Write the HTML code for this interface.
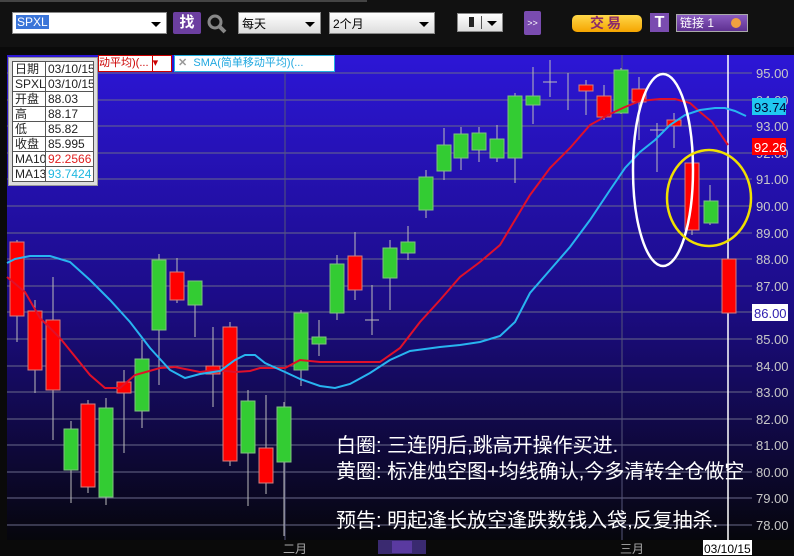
<!DOCTYPE html>
<html><head><meta charset="utf-8"><style>
body{margin:0;width:794px;height:556px;overflow:hidden;background:#0a0a0a;font-family:"Liberation Sans","Noto Sans CJK SC",sans-serif;position:relative}
.a{position:absolute}
.sel{background:linear-gradient(#fff,#ddd);border:1px solid #888;font-size:12px;color:#000;box-sizing:border-box;padding:2px 3px}
.arr{position:absolute;right:5px;top:9px;border-left:5px solid transparent;border-right:5px solid transparent;border-top:5px solid #000}
table{border-collapse:collapse;font-size:12px;color:#222;background:#fff;table-layout:fixed;width:82px}
td{border:1px solid #555;padding:0 2px;height:14px;line-height:14px;white-space:nowrap;overflow:hidden}
</style></head><body>
<div class="a" style="left:0;top:0;width:794px;height:47px;background:#111"></div>
<div class="a" style="left:0;top:0;width:367px;height:2px;background:#444"></div>
<div class="a sel" style="left:12px;top:12px;width:155px;height:22px;background:#fff"><span style="background:#3a74d8;color:#fff;padding:0 1px">SPXL</span><div class="arr"></div></div>
<div class="a" style="left:173px;top:12px;width:28px;height:22px;background:#6c3fa0;color:#fff;font-weight:bold;font-size:15px;text-align:center;line-height:22px;border-radius:2px">找</div>
<svg class="a" style="left:205px;top:12px" width="24" height="22"><circle cx="10" cy="10" r="6" stroke="#888" stroke-width="3" fill="none"/><line x1="14" y1="14" x2="20" y2="20" stroke="#888" stroke-width="4"/></svg>
<div class="a sel" style="left:238px;top:12px;width:83px;height:22px">每天<div class="arr"></div></div>
<div class="a sel" style="left:329px;top:12px;width:106px;height:22px">2个月<div class="arr"></div></div>
<div class="a sel" style="left:457px;top:13px;width:46px;height:19px"><div class="a" style="left:11px;top:3px;width:5px;height:10px;background:#222"></div><div class="a" style="left:23px;top:2px;width:1px;height:13px;background:#555"></div><div class="arr" style="top:7px"></div></div>
<div class="a" style="left:524px;top:11px;width:17px;height:24px;background:#7a4cb0;color:#fff;font-size:9px;text-align:center;line-height:24px;border-radius:2px">&gt;&gt;</div>
<div class="a" style="left:572px;top:15px;width:70px;height:17px;background:linear-gradient(#ffd84a,#f5a400);border-radius:5px;color:#8a2a6a;font-weight:bold;font-size:14px;text-align:center;line-height:17px;letter-spacing:3px">交易</div>
<div class="a" style="left:650px;top:13px;width:19px;height:19px;background:#7a4cb0;color:#fff;font-weight:bold;font-size:16px;text-align:center;line-height:19px">T</div>
<div class="a" style="left:676px;top:14px;width:72px;height:18px;background:linear-gradient(#8a5cc0,#5e3090);border:1px solid #aaa;box-sizing:border-box;color:#fff;font-size:12px;line-height:16px;padding-left:3px">链接 1<div class="a" style="left:54px;top:3px;width:10px;height:10px;border-radius:50%;background:#f0a040"></div></div>

<svg class="a" style="left:0;top:47px" width="794" height="509">
<defs><linearGradient id="g" x1="0" y1="0" x2="0" y2="1"><stop offset="0" stop-color="#2c16d6"/><stop offset="0.5" stop-color="#1c0c88"/><stop offset="1" stop-color="#06060c"/></linearGradient></defs>
<rect x="0" y="0" width="794" height="509" fill="#0a0a0a"/>
<rect x="7" y="8" width="787" height="485" fill="url(#g)"/>
<g transform="translate(0,-47)">
<g stroke="#6a6a8a" stroke-width="1">
<line x1="7" y1="73" x2="752" y2="73"/><line x1="7" y1="100" x2="752" y2="100"/><line x1="7" y1="126" x2="752" y2="126"/><line x1="7" y1="153" x2="752" y2="153"/><line x1="7" y1="179" x2="752" y2="179"/><line x1="7" y1="206" x2="752" y2="206"/><line x1="7" y1="233" x2="752" y2="233"/><line x1="7" y1="259" x2="752" y2="259"/><line x1="7" y1="286" x2="752" y2="286"/><line x1="7" y1="312" x2="752" y2="312"/><line x1="7" y1="339" x2="752" y2="339"/><line x1="7" y1="366" x2="752" y2="366"/><line x1="7" y1="392" x2="752" y2="392"/><line x1="7" y1="419" x2="752" y2="419"/><line x1="7" y1="445" x2="752" y2="445"/><line x1="7" y1="472" x2="752" y2="472"/><line x1="7" y1="498" x2="752" y2="498"/><line x1="7" y1="525" x2="752" y2="525"/>
<line x1="285" y1="55" x2="285" y2="540" stroke="#55557a"/><line x1="622" y1="55" x2="622" y2="540" stroke="#55557a"/>
</g>
<line x1="728" y1="55" x2="728" y2="540" stroke="#fff" stroke-width="1.5"/>
<g stroke="#bbb" stroke-width="1">
<line x1="17" y1="240" x2="17" y2="342"/><line x1="35" y1="300" x2="35" y2="393"/><line x1="53" y1="277" x2="53" y2="440"/><line x1="71" y1="421" x2="71" y2="503"/><line x1="88" y1="400" x2="88" y2="493"/><line x1="106" y1="398" x2="106" y2="505"/><line x1="124" y1="370" x2="124" y2="453"/><line x1="142" y1="340" x2="142" y2="428"/><line x1="159" y1="254" x2="159" y2="385"/><line x1="177" y1="258" x2="177" y2="303"/><line x1="195" y1="281" x2="195" y2="337"/><line x1="213" y1="327" x2="213" y2="407"/><line x1="230" y1="322" x2="230" y2="466"/><line x1="248" y1="390" x2="248" y2="506"/><line x1="266" y1="395" x2="266" y2="494"/><line x1="284" y1="402" x2="284" y2="536"/><line x1="301" y1="310" x2="301" y2="386"/><line x1="319" y1="320" x2="319" y2="356"/><line x1="337" y1="255" x2="337" y2="320"/><line x1="355" y1="232" x2="355" y2="300"/><line x1="372" y1="285" x2="372" y2="335"/><line x1="390" y1="240" x2="390" y2="310"/><line x1="408" y1="226" x2="408" y2="260"/><line x1="426" y1="170" x2="426" y2="218"/><line x1="444" y1="128" x2="444" y2="180"/><line x1="461" y1="127" x2="461" y2="170"/><line x1="479" y1="127" x2="479" y2="162"/><line x1="497" y1="125" x2="497" y2="162"/><line x1="515" y1="93" x2="515" y2="183"/><line x1="533" y1="67" x2="533" y2="124"/><line x1="550" y1="60" x2="550" y2="97"/><line x1="568" y1="73" x2="568" y2="110"/><line x1="586" y1="80" x2="586" y2="115"/><line x1="604" y1="85" x2="604" y2="120"/><line x1="621" y1="68" x2="621" y2="114"/><line x1="639" y1="77" x2="639" y2="140"/><line x1="657" y1="123" x2="657" y2="172"/><line x1="674" y1="113" x2="674" y2="148"/><line x1="692" y1="144" x2="692" y2="235"/><line x1="710" y1="185" x2="710" y2="225"/>
<line x1="365" y1="320" x2="379" y2="320"/><line x1="543" y1="82" x2="557" y2="82"/><line x1="650" y1="130" x2="664" y2="130"/>
</g>
<g stroke="#d08080" stroke-width="1" fill="#f00">
<rect x="10" y="242" width="14" height="74"/><rect x="28" y="311" width="14" height="59"/><rect x="46" y="320" width="14" height="70"/><rect x="81" y="404" width="14" height="83"/><rect x="117" y="382" width="14" height="11"/><rect x="170" y="272" width="14" height="28"/><rect x="206" y="366" width="14" height="8"/><rect x="223" y="327" width="14" height="134"/><rect x="259" y="448" width="14" height="35"/><rect x="348" y="256" width="14" height="34"/><rect x="579" y="85" width="14" height="6"/><rect x="597" y="96" width="14" height="21"/><rect x="632" y="89" width="14" height="13"/><rect x="667" y="120" width="14" height="6"/><rect x="685" y="163" width="14" height="67"/><rect x="722" y="259" width="14" height="54"/>
</g>
<g stroke="#80c080" stroke-width="1" fill="#33cc33">
<rect x="64" y="429" width="14" height="41"/><rect x="99" y="408" width="14" height="89"/><rect x="135" y="359" width="14" height="52"/><rect x="152" y="260" width="14" height="70"/><rect x="188" y="281" width="14" height="24"/><rect x="241" y="401" width="14" height="52"/><rect x="277" y="407" width="14" height="55"/><rect x="294" y="313" width="14" height="57"/><rect x="312" y="337" width="14" height="7"/><rect x="330" y="264" width="14" height="49"/><rect x="383" y="248" width="14" height="30"/><rect x="401" y="242" width="14" height="11"/><rect x="419" y="177" width="14" height="33"/><rect x="437" y="145" width="14" height="26"/><rect x="454" y="134" width="14" height="24"/><rect x="472" y="133" width="14" height="17"/><rect x="490" y="139" width="14" height="19"/><rect x="508" y="96" width="14" height="62"/><rect x="526" y="96" width="14" height="9"/><rect x="614" y="70" width="14" height="43"/><rect x="704" y="201" width="14" height="22"/>
</g>
<polyline fill="none" stroke="#e0102a" stroke-width="2" points="7,277 25,292 40,318 60,338 90,375 105,388 120,388 135,375 160,368 175,367 200,372 215,370 235,372 250,371 260,368 285,368 300,360 320,362 340,362 360,362 380,362 400,348 420,322 440,300 460,277 480,262 500,245 515,220 530,195 550,168 570,148 590,125 610,114 625,107 640,101 660,99 675,99 690,103 700,112 712,122 728,145"/>
<polyline fill="none" stroke="#28b4f0" stroke-width="2" points="7,263 15,259 30,256 50,256 70,262 90,280 110,300 130,322 150,348 170,370 185,378 200,374 220,371 235,360 245,355 255,355 265,363 285,372 300,379 320,386 335,388 350,384 370,373 390,360 410,351 440,347 460,345 480,342 500,336 515,322 530,293 550,270 570,247 590,220 610,190 625,168 640,152 655,140 670,125 685,115 700,110 715,108 725,108 735,111 746,116"/>
<ellipse cx="663" cy="170" rx="30" ry="96" fill="none" stroke="#fff" stroke-width="2.5"/>
<ellipse cx="709" cy="198" rx="42" ry="48" fill="none" stroke="#f0e000" stroke-width="2.5"/>
<g fill="#c8c8c8" font-size="13" font-family="Liberation Sans,sans-serif">
<text x="756" y="78">95.00</text><text x="756" y="105">94.00</text><text x="756" y="131">93.00</text><text x="756" y="158">92.00</text><text x="756" y="184">91.00</text><text x="756" y="211">90.00</text><text x="756" y="238">89.00</text><text x="756" y="264">88.00</text><text x="756" y="291">87.00</text><text x="756" y="344">85.00</text><text x="756" y="371">84.00</text><text x="756" y="397">83.00</text><text x="756" y="424">82.00</text><text x="756" y="450">81.00</text><text x="756" y="477">80.00</text><text x="756" y="503">79.00</text><text x="756" y="530">78.00</text>
</g>
<rect x="752" y="98" width="34" height="17" fill="#20c8f0"/><text x="754" y="112" font-size="13" fill="#003">93.74</text>
<rect x="752" y="138" width="34" height="17" fill="#f00"/><text x="754" y="152" font-size="13" fill="#fff">92.26</text>
<rect x="752" y="304" width="36" height="17" fill="#fff"/><text x="754" y="318" font-size="13" fill="#3020b0">86.00</text>
<rect x="0" y="540" width="794" height="16" fill="#0a0a0a"/>
<text x="283" y="553" font-size="12" fill="#aaa">二月</text><text x="620" y="553" font-size="12" fill="#aaa">三月</text>
<rect x="378" y="540" width="48" height="14" fill="#3a2a70"/><rect x="392" y="541" width="20" height="12" fill="#5a3aa0"/>
<rect x="703" y="540" width="49" height="15" fill="#fff"/><text x="704" y="553" font-size="12" fill="#000">03/10/15</text>
<g fill="#fff" font-size="20" font-family="Liberation Sans,Noto Sans CJK SC,sans-serif">
<text x="336" y="452">白圈: 三连阴后,跳高开操作买进.</text>
<text x="336" y="478">黄圈: 标准烛空图+均线确认,今多清转全仓做空</text>
<text x="336" y="527">预告: 明起逢长放空逢跌数钱入袋,反复抽杀.</text>
</g>
</g></svg>

<div class="a" style="left:98px;top:55px;width:74px;height:17px;background:#fff;border:1px solid #c00;box-sizing:border-box;color:#c00;font-size:11px;line-height:15px;white-space:nowrap;overflow:hidden">动平均)(...&nbsp;<span style="display:inline-block;width:9px;border-left:1px solid #c00;color:#c00">▾</span></div>
<div class="a" style="left:174px;top:55px;width:161px;height:17px;background:#fff;border:1px solid #20b0e0;box-sizing:border-box;color:#20a8e0;font-size:11px;line-height:15px;white-space:nowrap;overflow:hidden"><span style="color:#999;font-weight:bold">&nbsp;✕&nbsp;</span> SMA(简单移动平均)(...</div>
<div class="a" style="left:8px;top:57px;padding:3px;background:#ddd;border:1px solid #999">
<table><colgroup><col style="width:33px"><col style="width:48px"></colgroup>
<tr><td>日期</td><td>03/10/15</td></tr><tr><td>SPXL</td><td>03/10/15</td></tr><tr><td>开盘</td><td>88.03</td></tr><tr><td>高</td><td>88.17</td></tr><tr><td>低</td><td>85.82</td></tr><tr><td>收盘</td><td>85.995</td></tr><tr><td>MA10</td><td style="color:#e02020">92.2566</td></tr><tr><td>MA13</td><td style="color:#20b8e0">93.7424</td></tr>
</table></div>
</body></html>
